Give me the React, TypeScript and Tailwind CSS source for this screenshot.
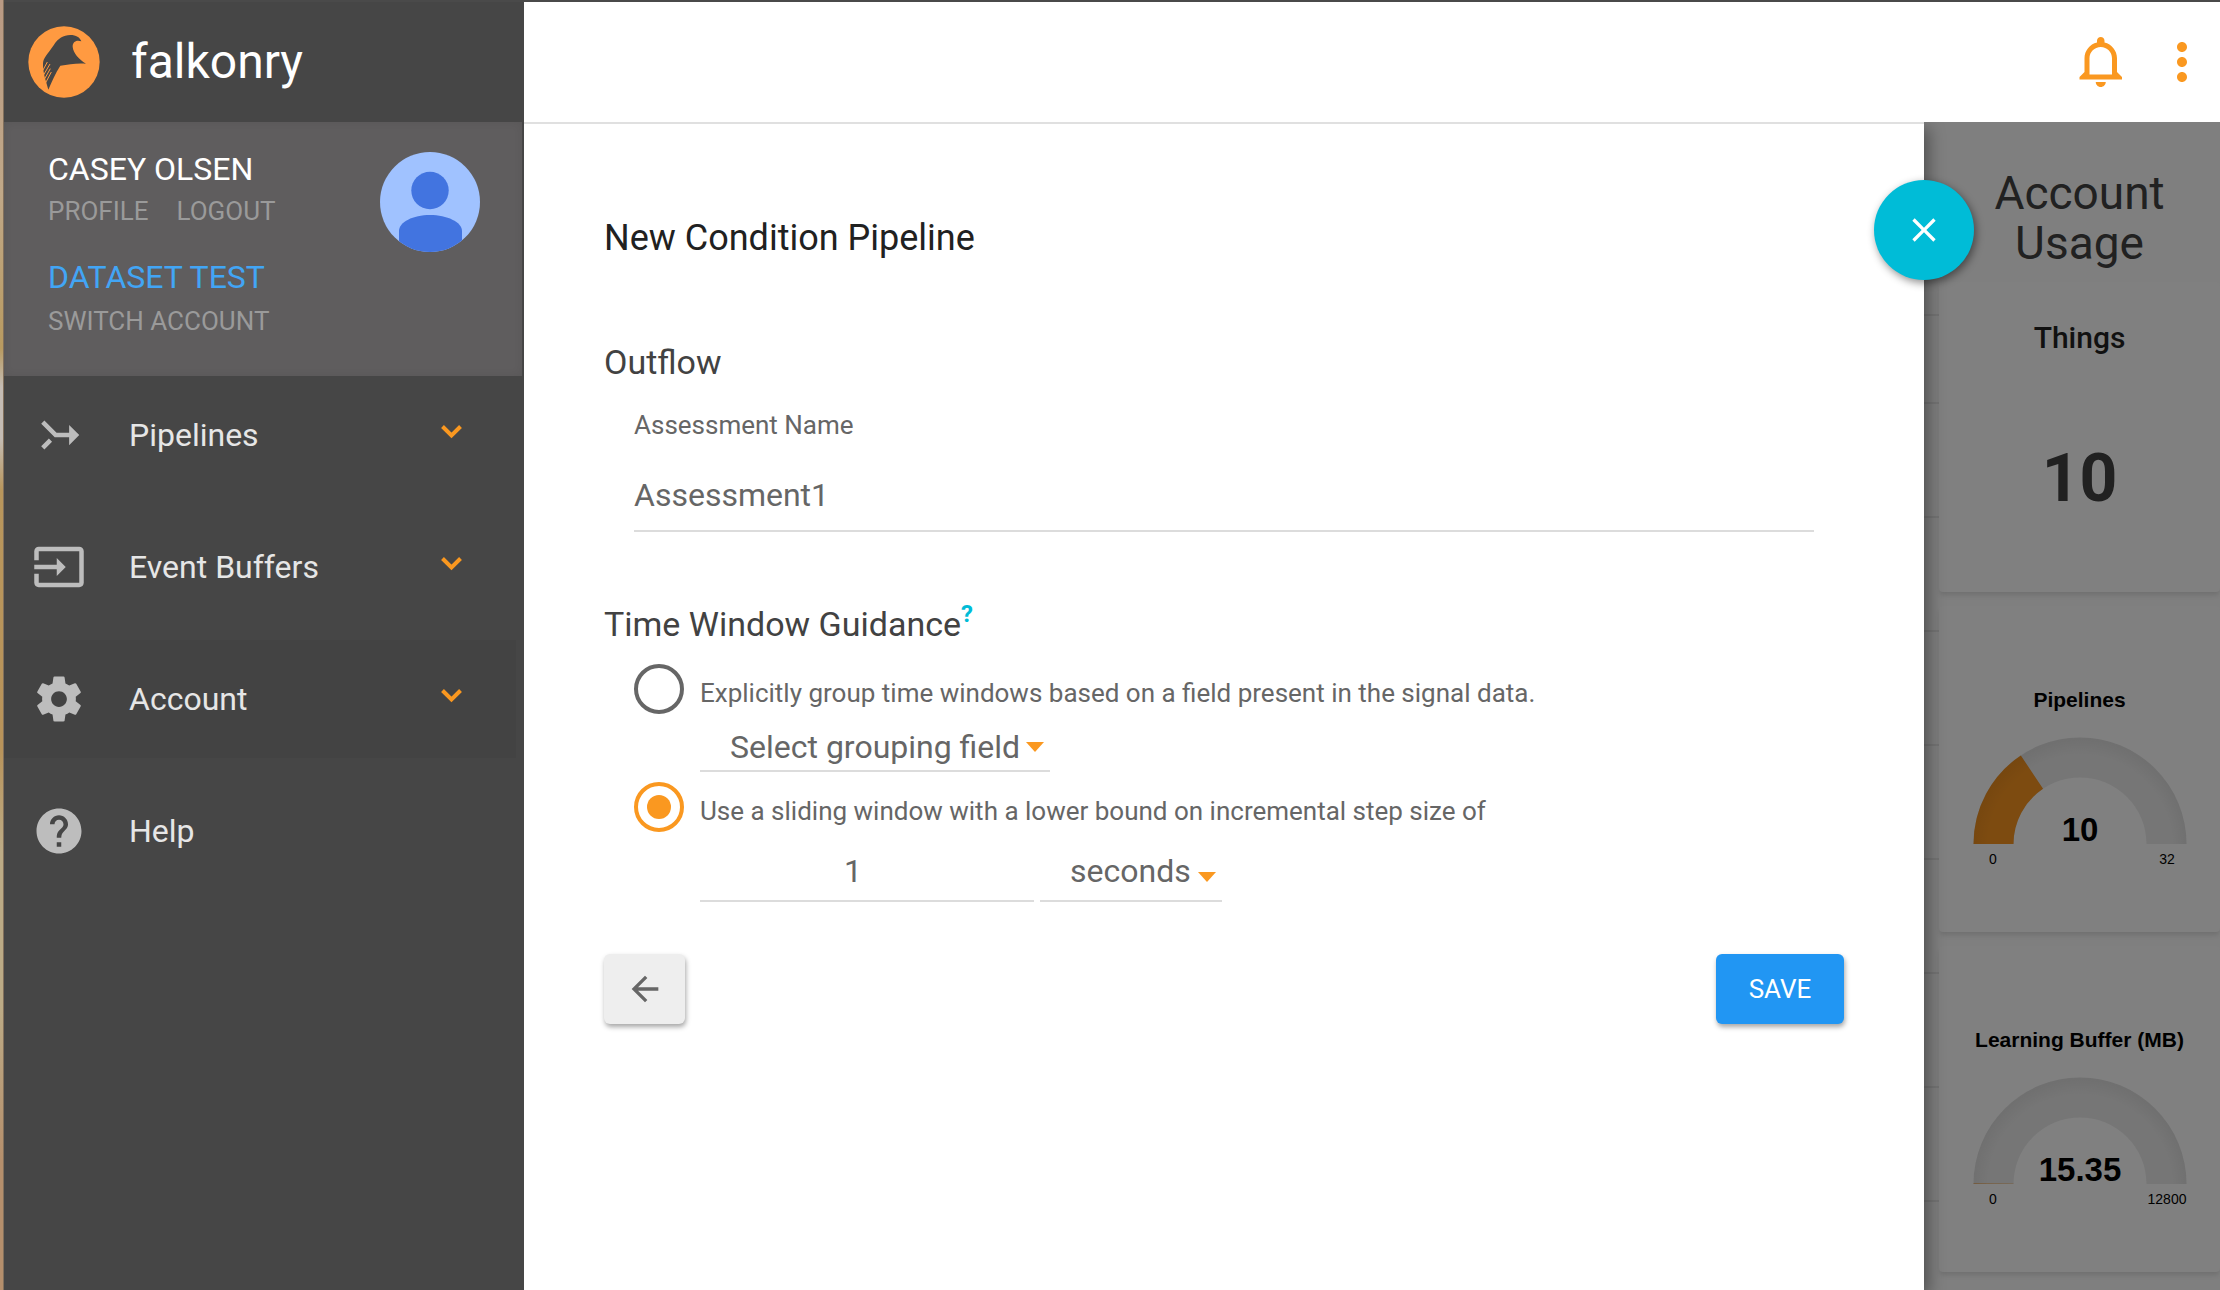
import React from "react";
import {
  MdArrowBack,
  MdClose,
  MdHelp,
  MdInput,
  MdMoreVert,
} from "react-icons/md";

function FalconLogo() {
  return (
    <svg viewBox="0 0 216 216" className="size-[72px] shrink-0" aria-hidden="true">
      <circle cx="108" cy="108" r="107" fill="#ff9a41" />
      <path
        d="M160 46C156 34 144 27 127 27C106 27 90 38 78 56C66 75 50 91 46 105C43 118 47 142 52 160L61 191C72 165 82 142 97 119C122 115 146 111 174 113C152 99 136 82 134 62C134 48 144 41 160 46Z"
        fill="#464646"
      />
      <path
        d="M44 134L58 108M46 148L66 114M49 160L67 128M52 172L70 138"
        fill="none"
        stroke="#ff9a41"
        strokeWidth="3"
      />
    </svg>
  );
}

function Avatar() {
  return (
    <svg viewBox="0 0 100 100" className="size-[100px] shrink-0" role="img" aria-label="Casey Olsen">
      <defs>
        <clipPath id="avatar-clip">
          <circle cx="50" cy="50" r="50" />
        </clipPath>
      </defs>
      <g clipPath="url(#avatar-clip)">
        <rect width="100" height="100" fill="#a0c2ff" />
        <circle cx="50" cy="38.5" r="18.7" fill="#4274e0" />
        <path d="M19 100V79C19 70 33 63 50 63S82 70 82 79V100Z" fill="#4274e0" />
      </g>
    </svg>
  );
}

function MergeIcon() {
  return (
    <svg viewBox="0 0 24 24" fill="currentColor" className="size-[54px] rotate-90" aria-hidden="true">
      <path d="M17 19.91L18.41 18.5 15 15.09 13.59 16.5 17 19.91zM7.5 7.5H11v5.59L5.59 18.5 7 19.91l6-6V7.5h3.5L12 3 7.5 7.5z" />
    </svg>
  );
}

function GearIcon() {
  return (
    <svg viewBox="0 0 24 24" fill="currentColor" className="size-[54px]" aria-hidden="true">
      <path d="M19.43 12.98c.04-.32.07-.64.07-.98s-.03-.66-.07-.98l2.11-1.65c.19-.15.24-.42.12-.64l-2-3.46c-.12-.22-.39-.3-.61-.22l-2.49 1c-.52-.4-1.08-.73-1.69-.98l-.38-2.65C14.46 2.18 14.25 2 14 2h-4c-.25 0-.46.18-.49.42l-.38 2.65c-.61.25-1.17.59-1.69.98l-2.49-1c-.23-.09-.49 0-.61.22l-2 3.46c-.13.22-.07.49.12.64l2.11 1.65c-.04.32-.07.65-.07.98s.03.66.07.98l-2.11 1.65c-.19.15-.24.42-.12.64l2 3.46c.12.22.39.3.61.22l2.49-1c.52.4 1.08.73 1.69.98l.38 2.65c.03.24.24.42.49.42h4c.25 0 .46-.18.49-.42l.38-2.65c.61-.25 1.17-.59 1.69-.98l2.49 1c.23.09.49 0 .61-.22l2-3.46c.12-.22.07-.49-.12-.64l-2.11-1.65zM12 15.5c-1.93 0-3.5-1.57-3.5-3.5s1.57-3.5 3.5-3.5 3.5 1.57 3.5 3.5-1.57 3.5-3.5 3.5z" />
    </svg>
  );
}

function BellIcon() {
  return (
    <svg viewBox="0 0 24 24" fill="currentColor" className="size-[60px]" aria-hidden="true">
      <path d="M11.5 22c1.1 0 2-.9 2-2h-4c0 1.1.9 2 2 2zm6.5-6v-5.5c0-3.07-2.13-5.64-5-6.32V3.5c0-.83-.67-1.5-1.5-1.5S10 2.67 10 3.5v.68c-2.87.68-5 3.25-5 6.32V16l-2 2v1h17v-1l-2-2zm-2 1H7v-6.5C7 8.01 9.01 6 11.5 6S16 8.01 16 10.5V17z" />
    </svg>
  );
}

function ChevronIcon() {
  return (
    <svg viewBox="0 0 21 14" className="mb-[6px] h-[14px] w-[21px]" aria-hidden="true">
      <path d="M1.5 1.5L10.5 10.5L19.5 1.5" fill="none" stroke="#fa9820" strokeWidth="4" />
    </svg>
  );
}

const navItems = [
  { label: "Pipelines", icon: <MergeIcon />, expandable: true, active: false },
  { label: "Event Buffers", icon: <MdInput className="size-[54px]" />, expandable: true, active: false },
  { label: "Account", icon: <GearIcon />, expandable: true, active: true },
  { label: "Help", icon: <MdHelp className="size-[54px]" />, expandable: false, active: false },
];

function Sidebar() {
  return (
    <aside className="flex w-[520px] shrink-0 flex-col bg-[#464646]">
      <div className="flex h-[120px] items-center gap-[31px] pl-6 text-[48px] leading-[56px] text-white">
        <FalconLogo />
        <span>falkonry</span>
      </div>
      <section className="mr-[2px] flex h-[254px] justify-between bg-[#5f5d5e] pt-[30px] pr-[42px] pl-[44px] shadow-[inset_0_0_8px_rgba(0,0,0,0.08)]">
        <div className="-mt-px text-[26px] leading-8 text-[#9a9a9a]">
          <p className="text-[32px] leading-[36px] text-white">CASEY OLSEN</p>
          <div className="mt-[8px] flex gap-[28px]">
            <a href="#profile">PROFILE</a>
            <a href="#logout">LOGOUT</a>
          </div>
          <p className="mt-[32px] text-[32px] leading-[36px] text-[#42a5f5]">DATASET TEST</p>
          <a href="#switch" className="mt-[10px] block">
            SWITCH ACCOUNT
          </a>
        </div>
        <Avatar />
      </section>
      <nav className="flex flex-col gap-[14px] pr-2">
        {navItems.map((item) => (
          <button
            key={item.label}
            type="button"
            className={
              "flex h-[118px] items-center pr-[54px] pl-7 text-left text-[32px] leading-10 text-[#e6e6e6] " +
              (item.active ? "bg-[#434343]" : "")
            }
          >
            <span className="mr-[43px] text-[#bdbdbd]">{item.icon}</span>
            <span className="flex-1">{item.label}</span>
            {item.expandable && <ChevronIcon />}
          </button>
        ))}
      </nav>
    </aside>
  );
}

function DropArrow() {
  return (
    <svg
      viewBox="0 0 18 10"
      className="pointer-events-none absolute right-[6px] bottom-[20px] h-[10px] w-[18px]"
      aria-hidden="true"
    >
      <path d="M0 0H18L9 10Z" fill="#fa9820" />
    </svg>
  );
}

const radioClass =
  "grid size-[50px] shrink-0 appearance-none place-content-center rounded-full border-4 border-[#666] before:size-[24px] before:rounded-full checked:border-[#fa9820] checked:before:bg-[#fa9820]";

function ConditionForm() {
  return (
    <form
      className="relative z-10 min-w-0 flex-1 border-t-2 border-[#e0e0e0] bg-white px-20 pt-[94px] text-[#666] shadow-[4px_6px_16px_rgba(0,0,0,0.4)]"
      onSubmit={(e) => e.preventDefault()}
    >
      <button
        type="button"
        aria-label="Close"
        className="absolute top-[56px] -right-[50px] grid size-[100px] place-items-center rounded-full bg-[#00bcd7] text-white shadow-[2px_3px_8px_rgba(0,0,0,0.45)]"
      >
        <MdClose className="size-10" />
      </button>

      <h1 className="text-[36px] leading-10 text-[#212121]">New Condition Pipeline</h1>

      <h2 className="mt-[84px] text-[34px] leading-10 text-[#424242]">Outflow</h2>
      <div className="mx-[30px] mt-[27px]">
        <label htmlFor="assessment-name" className="block text-[26px] leading-8">
          Assessment Name
        </label>
        <input
          id="assessment-name"
          type="text"
          defaultValue="Assessment1"
          className="mt-[19px] block h-[72px] w-full border-b-2 border-[#dcdcdc] text-[32px] outline-none"
        />
      </div>

      <h2 className="mt-[72px] flex text-[34px] leading-10 text-[#424242]">
        Time Window Guidance
        <a href="#guidance-help" className="-mt-1 h-6 text-[24px] leading-[28px] font-bold text-[#00bcd7]">
          ?
        </a>
      </h2>
      <div className="mx-[30px] mt-5">
        <div className="flex items-center gap-4">
          <input id="group-field" type="radio" name="guidance" className={radioClass} />
          <label htmlFor="group-field" className="pt-2 text-[26px] leading-8">
            Explicitly group time windows based on a field present in the signal data.
          </label>
        </div>
        <div className="relative mt-2 ml-[66px] w-[350px]">
          <select
            aria-label="Grouping field"
            className="block h-[50px] w-full appearance-none border-b-2 border-[#dcdcdc] pt-[2px] pl-[30px] text-[32px] leading-10 outline-none"
          >
            <option>Select grouping field</option>
          </select>
          <DropArrow />
        </div>
        <div className="mt-[10px] flex items-center gap-4">
          <input id="sliding-window" type="radio" name="guidance" defaultChecked className={radioClass} />
          <label htmlFor="sliding-window" className="pt-2 text-[26px] leading-8">
            Use a sliding window with a lower bound on incremental step size of
          </label>
        </div>
        <div className="mt-2 ml-[66px] flex gap-[6px]">
          <input
            type="text"
            aria-label="Step size"
            defaultValue="1"
            className="h-[62px] w-[334px] border-b-2 border-[#dcdcdc] pt-[2px] pr-8 pl-1 text-center text-[32px] outline-none"
          />
          <div className="relative w-[182px]">
            <select
              aria-label="Step unit"
              className="block h-[62px] w-full appearance-none border-b-2 border-[#dcdcdc] pt-[2px] pl-[30px] text-[32px] leading-10 outline-none"
            >
              <option>seconds</option>
            </select>
            <DropArrow />
          </div>
        </div>
      </div>

      <div className="mt-[52px] flex justify-between">
        <button
          type="button"
          aria-label="Back"
          className="grid h-[70px] w-[81px] place-items-center rounded-md bg-[#eee] shadow-[1px_3px_5px_rgba(0,0,0,0.35)]"
        >
          <MdArrowBack className="size-10" />
        </button>
        <button
          type="submit"
          className="h-[70px] w-[128px] rounded-md bg-[#2196f3] text-[26px] leading-8 text-white shadow-[1px_3px_5px_rgba(0,0,0,0.35)]"
        >
          SAVE
        </button>
      </div>
    </form>
  );
}

const cardClass = "rounded-[4px] bg-[#808080] text-center shadow-[0_4px_5px_-1px_rgba(0,0,0,0.12)]";

type GaugeProps = { id: string; title: string; value: string; max: string; ratio: number };

function GaugeCard({ id, title, value, max, ratio }: GaugeProps) {
  const angle = Math.PI * (1 - ratio);
  const at = (r: number) =>
    (107 + r * Math.cos(angle)).toFixed(2) + " " + (107 - r * Math.sin(angle)).toFixed(2);
  return (
    <section className={cardClass + " h-[326px] pt-[78px] font-['Liberation_Sans',Arial,sans-serif] text-black"}>
      <h3 className="text-[21px] leading-8 font-bold whitespace-nowrap">{title}</h3>
      <svg viewBox="0 0 214 134" className="mx-auto mt-[21px] h-[134px] w-[214px]" role="img" aria-label={title}>
        <defs>
          <radialGradient id={id} gradientUnits="userSpaceOnUse" cx="107" cy="110" r="107">
            <stop offset="0.62" stopColor="#000" stopOpacity="0" />
            <stop offset="0.86" stopColor="#000" stopOpacity="0" />
            <stop offset="1" stopColor="#000" stopOpacity="0.05" />
          </radialGradient>
        </defs>
        <path d="M0.5 107A106.5 106.5 0 0 1 213.5 107H173.5A66.5 66.5 0 0 0 40.5 107Z" fill="#767676" />
        <path
          d={`M0.5 107A106.5 106.5 0 0 1 ${at(106.5)}L${at(66.5)}A66.5 66.5 0 0 0 40.5 107Z`}
          fill="#7d4b10"
        />
        <path d="M0.5 107A106.5 106.5 0 0 1 213.5 107H173.5A66.5 66.5 0 0 0 40.5 107Z" fill={`url(#${id})`} />
        <text x="107" y="104" textAnchor="middle" fontSize="33" fontWeight="700">
          {value}
        </text>
        <text x="20" y="127" textAnchor="middle" fontSize="14">
          0
        </text>
        <text x="194" y="127" textAnchor="middle" fontSize="14">
          {max}
        </text>
      </svg>
    </section>
  );
}

const backgroundRows = [
  "h-[194px]",
  "h-[88px]",
  "h-[114px]",
  "h-[114px]",
  "h-[114px]",
  "h-[114px]",
  "h-[114px]",
  "h-[114px]",
  "h-[114px]",
];

function UsagePanel() {
  return (
    <aside className="flex w-[296px] shrink-0 bg-[#7f7f7f]">
      <div className="w-[15px] shrink-0" aria-hidden="true">
        {backgroundRows.map((height, i) => (
          <div key={i} className={"border-b-2 border-[#757575] " + height} />
        ))}
      </div>
      <div className="flex min-w-0 flex-1 flex-col gap-[14px] pt-[46px]">
        <h2 className="px-10 text-center text-[46px] leading-[50px] text-[#212121]">Account Usage</h2>
        <section className={cardClass + " h-[310px] pt-9"}>
          <h3 className="text-[30px] leading-10 font-medium text-[#111]">Things</h3>
          <p className="mt-[81px] text-[66px] leading-[80px] font-bold text-[#212121]">10</p>
        </section>
        <GaugeCard id="gauge-pipelines" title="Pipelines" value="10" max="32" ratio={10 / 32} />
        <GaugeCard id="gauge-buffer" title="Learning Buffer (MB)" value="15.35" max="12800" ratio={15.35 / 12800} />
      </div>
    </aside>
  );
}

export default function App() {
  return (
    <div className="flex min-h-screen bg-white font-[Roboto,sans-serif]">
      <div className="w-1 shrink-0 border-r border-[#82705c] bg-[linear-gradient(to_bottom,#b99a84_0%,#c0a888_15%,#b89a60_27%,#c4bcb4_30%,#c4bcb4_34%,#b8965c_38%,#b8935a_58%,#bcab86_66%,#bcab86_78%,#b58f6c_90%,#b58f6c_100%)]" />
      <div className="flex min-w-0 flex-1 border-t-2 border-[#4a4a4a]">
        <Sidebar />
        <div className="flex min-w-0 flex-1 flex-col">
          <header className="flex h-[120px] items-center justify-end gap-5 pr-2 text-[#fa9820]">
            <button type="button" aria-label="Notifications">
              <BellIcon />
            </button>
            <button type="button" aria-label="More options">
              <MdMoreVert className="size-[60px]" />
            </button>
          </header>
          <div className="flex flex-1 overflow-hidden">
            <ConditionForm />
            <UsagePanel />
          </div>
        </div>
      </div>
    </div>
  );
}
